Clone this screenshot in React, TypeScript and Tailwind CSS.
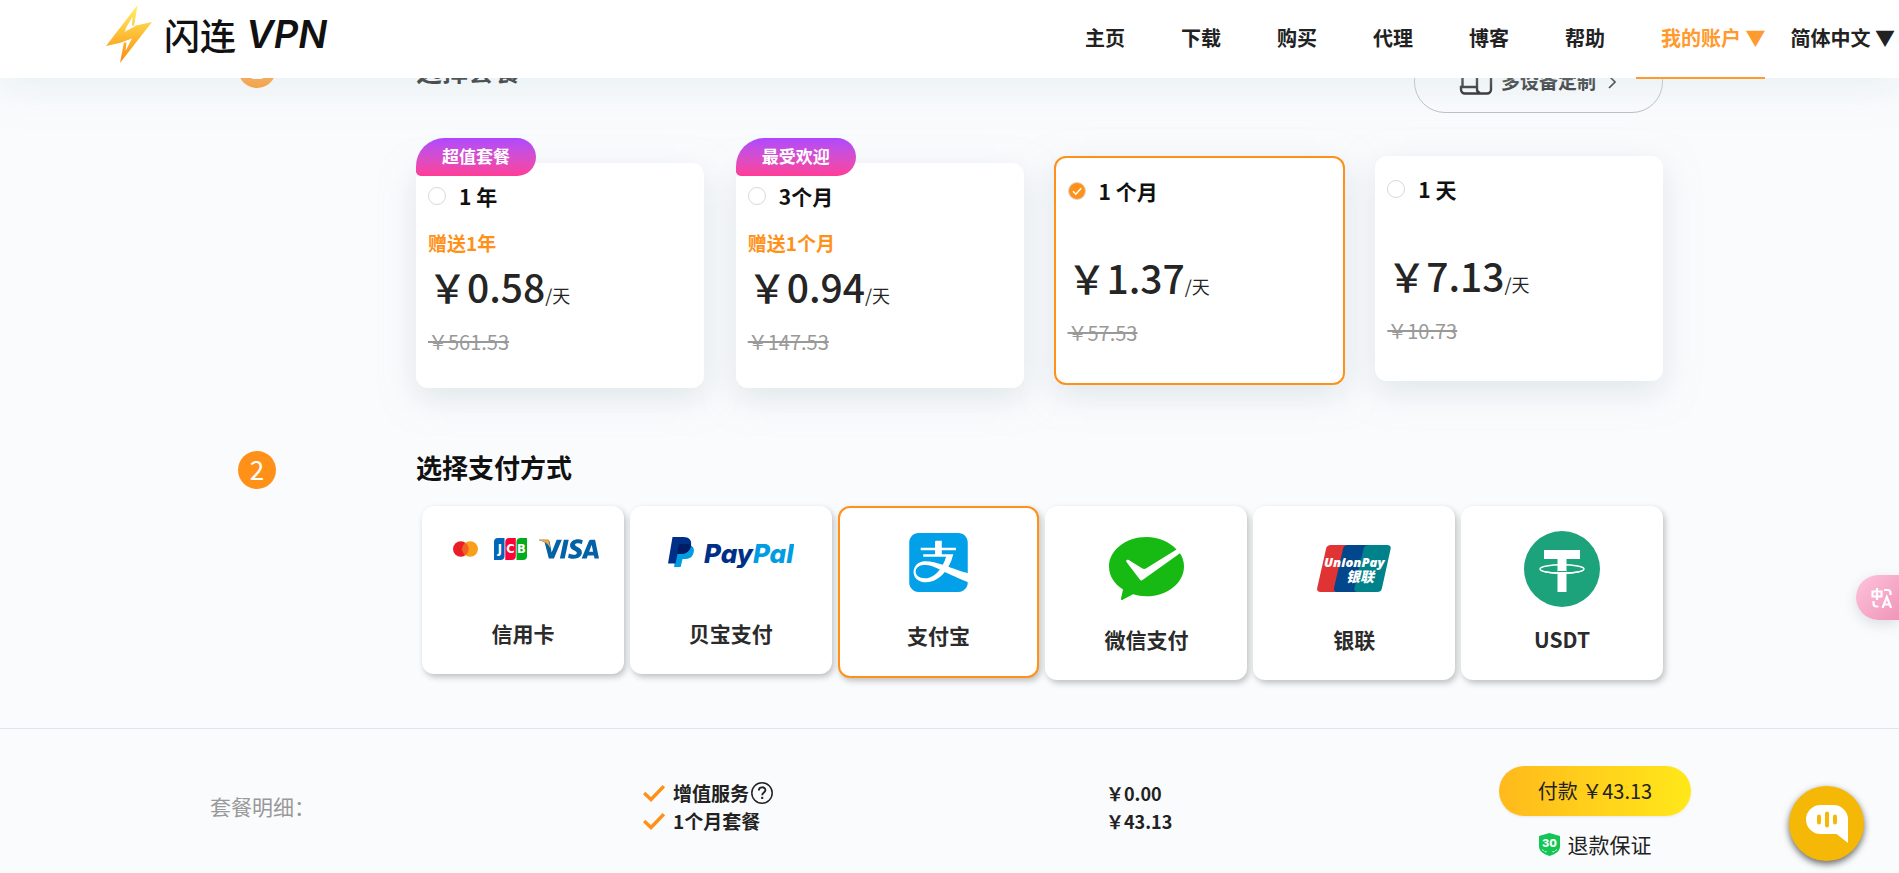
import { useState } from "react";
import type { ReactNode } from "react";
import { SiAlipay, SiVisa } from "react-icons/si";

type Plan = { id: string; name: string; gift?: string; price: string; old: string; ribbon?: string };

const navLinks = ["主页", "下载", "购买", "代理", "博客", "帮助"];

const plans: Plan[] = [
  { id: "year", name: "1 年", gift: "赠送1年", price: "￥0.58", old: "￥561.53", ribbon: "超值套餐" },
  { id: "quarter", name: "3个月", gift: "赠送1个月", price: "￥0.94", old: "￥147.53", ribbon: "最受欢迎" },
  { id: "month", name: "1 个月", price: "￥1.37", old: "￥57.53" },
  { id: "day", name: "1 天", price: "￥7.13", old: "￥10.73" },
];

function BoltLogo() {
  return (
    <svg viewBox="0 0 46 58" className="h-[58px] w-[46px]" aria-hidden="true">
      <defs>
        <linearGradient id="bolt" x1="0" y1="0" x2="0" y2="1">
          <stop offset="0" stopColor="#fff06a" />
          <stop offset="0.5" stopColor="#fdbf35" />
          <stop offset="1" stopColor="#f98a12" />
        </linearGradient>
      </defs>
      <path d="M31.500 0 0 41l18-4-4 21L46 17l-18 4z" fill="url(#bolt)" />
      <path d="M26.500 12 19 24.500l7.500-2.500 5-1.800L19 26l7-5z" fill="#fff" />
      <path d="M26.500 12 25 20.500l4.500.3L18.500 27z" fill="#fff" />
      <path d="M19.500 46 26 33.500 19 36l-4.500 2 6-.5z" fill="#fff" />
    </svg>
  );
}

function DevicesIcon() {
  return (
    <svg viewBox="0 0 34 30" className="h-[30px] w-[34px]" fill="none" stroke="#1c1c1e" strokeWidth="2.400" aria-hidden="true">
      <path d="M3.500 21V5a3 3 0 0 1 3-3h18a3 3 0 0 1 3 3v1" />
      <path d="M18 22H2v2.500A4 4 0 0 0 6 28.500h22a4 4 0 0 0 4-4V8a2 2 0 0 0-2-2H20a2 2 0 0 0-2 2v16a4 4 0 0 0 3 4" />
    </svg>
  );
}

function StepBadge({ n }: { n: number }) {
  return (
    <div className="w-[178px] shrink-0">
      <div className="flex h-[38px] w-[38px] items-start justify-center rounded-full bg-[#ff9119] text-[26px] leading-9 text-white">
        {n}
      </div>
    </div>
  );
}

function PlanCard({ plan, checked, onSelect }: { plan: Plan; checked: boolean; onSelect: () => void }) {
  return (
    <label
      className={
        "relative block cursor-pointer rounded-xl bg-white px-3 pb-[26px] shadow-[0_10px_32px_rgba(200,214,217,0.55)] " +
        (checked ? "-mx-0.5 border-2 border-[#ff9119] " : "") +
        (plan.ribbon ? "mt-[7px]" : "")
      }
    >
      {plan.ribbon && (
        <span className="absolute -top-[25px] left-0 flex h-[38px] w-[120px] items-center justify-center rounded-[30px_20px_20px_5px] bg-linear-to-b from-[#af47ff] to-[#ff3c96] pb-0.5 text-[17px] font-bold text-white">
          {plan.ribbon}
        </span>
      )}
      <span className="flex h-[66px] items-center gap-[13px]">
        <span className="relative flex h-[18px] w-[18px]">
          <input
            type="radio"
            name="plan"
            checked={checked}
            onChange={onSelect}
            className="h-[18px] w-[18px] appearance-none rounded-full border border-[#d9d9d9] bg-white checked:bg-[#ff9119]"
          />
          {checked && (
            <svg viewBox="0 0 18 18" className="pointer-events-none absolute inset-0 h-[18px] w-[18px]" fill="none" stroke="#fff" strokeWidth="1.500">
              <path d="M5 9.300 7.800 12.200 13.200 6.200" />
            </svg>
          )}
        </span>
        <span className="text-[21px] leading-[30px] font-bold text-[#111]">{plan.name}</span>
      </span>
      <span className={"block text-[19px] leading-7 font-bold text-[#ff9119] " + (plan.gift ? "h-7" : "h-6")}>
        {plan.gift}
      </span>
      <span className="flex items-baseline leading-[58px] text-[#252525]">
        <span className="text-[39px] font-medium">{plan.price}</span>
        <span className="text-lg">/天</span>
      </span>
      <span className={"block text-[20px] leading-[54px] text-[#999] line-through " + (plan.gift ? "h-[47px]" : "h-[51px]")}>
        {plan.old}
      </span>
    </label>
  );
}

function CardLogos() {
  return (
    <div className="flex items-center pl-1.5">
      <svg viewBox="0 0 25 16" className="h-4 w-[25px]" aria-label="Mastercard">
        <circle cx="7.800" cy="8" r="7.800" fill="#ea1c26" />
        <circle cx="17.200" cy="8" r="7.800" fill="#f99f1b" />
        <path d="M12.500 1.800a7.800 7.800 0 0 1 0 12.400 7.800 7.800 0 0 1 0-12.400z" fill="#f26022" />
      </svg>
      <svg viewBox="0 0 33 22" className="ml-4 h-[22px] w-[33px]" aria-label="JCB">
        <path d="M4 0h6.500v18a4 4 0 0 1-4 4H0V4a4 4 0 0 1 4-4z" fill="#0067b8" />
        <path d="M15.300 0h6.500v18a4 4 0 0 1-4 4h-6.500V4a4 4 0 0 1 4-4z" fill="#ff0037" />
        <path d="M26.500 0H33v18a4 4 0 0 1-4 4h-6.500V4a4 4 0 0 1 4-4z" fill="#00ad1d" />
        <g textAnchor="middle" fontSize="11.500" fontWeight="700" fill="#fff" fontFamily="DejaVu Sans, sans-serif">
          <text x="6" y="15">J</text>
          <text x="16.500" y="15">C</text>
          <text x="27.500" y="15">B</text>
        </g>
      </svg>
      <span className="relative ml-3 block h-5 w-[60px] overflow-hidden">
        <SiVisa className="absolute -top-5 left-0 h-[60px] w-[60px] text-[#0361a5]" aria-label="Visa" />
        <svg viewBox="0 0 12 10" className="absolute top-0 left-0 h-2.5 w-3" aria-hidden="true">
          <path d="M0 .5h9.500l2 9C9.500 5 6 2.500 0 1.200z" fill="#f2a63b" />
        </svg>
      </span>
    </div>
  );
}

function PayPalLogo() {
  return (
    <svg viewBox="0 0 126 31" className="h-[31px] w-[126px]" aria-label="PayPal">
      <path d="M9.500 8h12c4.500 1 5 5 4 8-1.200 4.500-4.500 6-9 6h-2l-1.800 8H6z" fill="#009de3" />
      <path d="M4.500 0h11c5.500 0 8.500 3 7.500 8.500C22 14 18 17 13 17h-3.500l-2 9.500H0z" fill="#002f87" />
      <path d="M10.500 8.500C11 7.500 12 7 13 7h9.800c.3 4-2 7.500-5 9-1.800.8-4 1-8.500 1z" fill="#001c64" />
      <text x="36" y="25.500" fontSize="26" fontWeight="800" fontStyle="italic" fontFamily="Inter, sans-serif" fill="#002f87">
        Pay<tspan fill="#009de3">Pal</tspan>
      </text>
    </svg>
  );
}

function WeChatPayLogo() {
  return (
    <svg viewBox="0 0 75 63" className="h-[63px] w-[75px]" aria-hidden="true">
      <path
        d="M37.500 0C16.800 0 0 13.200 0 29.500c0 9.300 5.400 17.600 14 23L12 61.500c-.3 1.400.6 1.800 1.600 1.200L24 57.300c4.200 1.300 8.700 2 13.500 2 20.700 0 37.500-13.300 37.500-29.800 0-4.800-1.400-9.300-4-13.300L33.500 43c-1 .8-2 .6-2.700-.4L17.500 25c-1-1.600.6-3 2.200-2L33 31.300c1.600.9 2.800.8 4.300 0L67.500 12.500C60.800 5 49.900 0 37.500 0z"
        fill="#16ba12"
      />
    </svg>
  );
}

function UnionPayLogo() {
  return (
    <svg viewBox="0 0 74 47" className="h-[47px] w-[74px]" aria-label="UnionPay">
      <path d="M14 0h20L24 47H3.500C1 47-.4 45.500.2 43L9 4c.7-3 2.200-4 5-4z" fill="#e03434" />
      <path d="M31 0h22L42 47H20c-2.500 0-3.500-1.500-3-4L26 4c.7-3 2.200-4 5-4z" fill="#02468b" />
      <path d="M51.500 0H70c3 0 4.200 1.500 3.600 4L65 43c-.7 3-2 4-5 4H41c-3 0-4.200-1.500-3.600-4L46.500 4c.7-3 2.200-4 5-4z" fill="#00828b" />
      <text x="7" y="22" fontSize="13" fontWeight="800" fontStyle="italic" fontFamily="Open Sans, sans-serif" fill="#fff">UnionPay</text>
      <text x="29" y="37" fontSize="14" fontWeight="900" fontStyle="italic" fontFamily="Noto Sans CJK SC, sans-serif" fill="#fff">银联</text>
    </svg>
  );
}

function TetherLogo() {
  return (
    <svg viewBox="0 0 76 76" className="h-[76px] w-[76px]" aria-hidden="true">
      <circle cx="38" cy="38" r="38" fill="#1ca37b" />
      <path d="M20 19h36v9H42.500v33h-9V28H20z" fill="#fff" />
      <path d="M33.500 40.500h9" stroke="#1ca37b" strokeWidth="1" />
      <ellipse cx="38" cy="38" rx="22" ry="4.200" fill="none" stroke="#fff" strokeWidth="1.400" />
      <path d="M15.500 38c0 6.500 45 6.500 45 0-2 4.500-43 4.500-45 0z" fill="#fff" />
    </svg>
  );
}

type Method = { id: string; name: string; logo: ReactNode; body: string };

const methods: Method[] = [
  { id: "card", name: "信用卡", logo: <CardLogos />, body: "h-[168px] pt-8" },
  { id: "paypal", name: "贝宝支付", logo: <PayPalLogo />, body: "h-[168px] pt-[31px]" },
  { id: "alipay", name: "支付宝", logo: <SiAlipay className="h-[59px] w-[59px] text-[#02a0e9]" />, body: "h-[172px] pt-[25px]" },
  { id: "wechat", name: "微信支付", logo: <WeChatPayLogo />, body: "h-[174px] pt-[31px]" },
  { id: "unionpay", name: "银联", logo: <UnionPayLogo />, body: "h-[174px] pt-[39px]" },
  { id: "usdt", name: "USDT", logo: <TetherLogo />, body: "h-[174px] pt-[25px]" },
];

function MethodCard({ method, checked, onSelect }: { method: Method; checked: boolean; onSelect: () => void }) {
  return (
    <label
      className={
        "relative flex cursor-pointer flex-col items-center justify-between rounded-xl bg-white pb-[25px] shadow-[2px_3px_6px_rgba(0,0,0,0.24)] " +
        method.body +
        (checked ? " border-2 border-[#ff9119]" : "")
      }
    >
      <input type="radio" name="method" className="sr-only" checked={checked} onChange={onSelect} />
      {method.logo}
      <span className="text-[21px] leading-8 font-bold text-[#2b2b2b]">{method.name}</span>
    </label>
  );
}

function Tick() {
  return (
    <svg viewBox="0 0 22 17" className="h-[17px] w-[22px]" fill="none" stroke="#ff9119" strokeWidth="3.400" aria-hidden="true">
      <path d="M1.200 8 8 14.500 20.800 1.200" />
    </svg>
  );
}

export default function App() {
  const [plan, setPlan] = useState("month");
  const [method, setMethod] = useState("alipay");

  return (
    <div className="min-h-screen bg-[#fafbfd] font-['Noto_Sans_CJK_SC','Noto_Sans',sans-serif] text-[#222]">
      <header className="sticky top-0 z-20 flex h-[78px] items-start justify-between bg-white pr-1 pl-[106px] shadow-[0_8px_36px_rgba(214,230,235,0.5)]">
        <a href="#home" className="flex items-center pt-[5px] text-[#111]">
          <BoltLogo />
          <span className="ml-3 flex items-center gap-2.5">
            <span className="text-[36px] leading-[50px] font-medium [font-style:oblique_6deg]">闪连</span>
            <span className="font-['Inter',sans-serif] text-[38px] leading-[50px] font-semibold italic">VPN</span>
          </span>
        </a>
        <nav className="flex text-xl font-bold">
          <div className="flex gap-[31px]">
            {navLinks.map((l) => (
              <a key={l} href="#nav" className="flex h-[79px] items-center pb-1 pl-[25px]">
                {l}
              </a>
            ))}
            <a href="#account" className="flex h-[79px] items-center border-b-2 border-[#ff9a2e] pb-0.5 pl-[25px] text-[#ff9a2e]">
              我的账户 ▼
            </a>
          </div>
          <a href="#language" className="flex h-[79px] items-center pb-1 pl-[25px]">
            简体中文 ▼
          </a>
        </nav>
      </header>

      <main className="-mt-7 pr-[236px] pb-12 pl-[238px]">
        <section className="flex">
          <StepBadge n={1} />
          <div className="min-w-0 flex-1">
            <div className="flex items-start justify-between">
              <h2 className="text-[26px] leading-10 font-bold text-[#111]">选择套餐</h2>
              <button type="button" className="flex h-[63px] w-[249px] items-center justify-center gap-2 rounded-[31px] border border-[#b9bfc4] pr-0.5 text-[19px] font-bold text-[#222]">
                <span className="pb-1"><DevicesIcon /></span>
                多设备定制
                <svg viewBox="0 0 8 14" className="ml-1 h-3.5 w-2" fill="none" stroke="#222" strokeWidth="1.600">
                  <path d="m1 1 6 6-6 6" />
                </svg>
              </button>
            </div>
            <div className="mt-[43px] grid grid-cols-4 items-start gap-8">
              {plans.map((p) => (
                <PlanCard key={p.id} plan={p} checked={plan === p.id} onSelect={() => setPlan(p.id)} />
              ))}
            </div>
          </div>
        </section>

        <section className="mt-[63px] flex">
          <StepBadge n={2} />
          <div className="min-w-0 flex-1">
            <h2 className="text-[26px] leading-8 font-bold text-[#111]">选择支付方式</h2>
            <div className="mt-[23px] grid grid-cols-6 items-start gap-1.5 pl-1.5">
              {methods.map((m) => (
                <MethodCard key={m.id} method={m} checked={method === m.id} onSelect={() => setMethod(m.id)} />
              ))}
            </div>
          </div>
        </section>
      </main>

      <footer className="grid grid-cols-[433fr_463fr_393fr_192fr] items-start border-t border-[#dce8ea] pt-[37px] pr-[208px] pl-[210px]">
        <div className="mt-6 text-[21px] leading-8 text-[#999]">套餐明细：</div>
        <ul className="mt-[13px] text-[19px] leading-7 font-bold">
          <li className="flex items-center gap-2">
            <Tick />
            <span className="flex items-center gap-0.5">
              增值服务
              <svg viewBox="0 0 22 22" className="h-[22px] w-[22px]" fill="none" stroke="#222" aria-label="帮助">
                <circle cx="11" cy="11" r="10.200" strokeWidth="1.500" />
                <path d="M7.800 8.600c0-4.400 6.600-4.200 6.600-.4 0 2.200-3.200 2.600-3.200 5" strokeWidth="1.900" />
                <path d="M11.200 14.800v2.200" strokeWidth="2" />
              </svg>
            </span>
          </li>
          <li className="flex items-center gap-2">
            <Tick />
            1个月套餐
          </li>
        </ul>
        <div className="mt-[13px] text-lg leading-7 font-bold">
          <p>￥0.00</p>
          <p>￥43.13</p>
        </div>
        <div className="flex flex-col items-center">
          <button type="button" className="h-[50px] w-full rounded-full bg-linear-to-r from-[#ffb91c] to-[#ffe819] text-xl text-[#222] shadow-[0_1px_3px_rgba(0,0,0,0.08)]">
            付款 ￥43.13
          </button>
          <p className="mt-3 flex items-center gap-2 text-[21px] leading-8">
            <svg viewBox="0 0 21 23" className="h-[23px] w-[21px]" aria-hidden="true">
              <path d="M10.500 0 21 3v10.500c0 5-5 7.500-10.500 9.500C5 21 0 18.500 0 13.500V3z" fill="#13c553" />
              <text x="10.500" y="14" textAnchor="middle" fontSize="11" fontWeight="800" fontFamily="Inter, sans-serif" fill="#fff">30</text>
              <path d="M3.500 16.500c1.500 2.500 3 2.500 5 2M17.500 16.500c-1.500 2.500-3 2.500-5 2" fill="none" stroke="#fff" strokeWidth="1" strokeDasharray="2 1" />
            </svg>
            退款保证
          </p>
        </div>
      </footer>

      <button type="button" aria-label="翻译" className="fixed top-[575px] right-0 z-30 flex h-[45px] w-[43px] items-center justify-center rounded-l-full bg-linear-to-br from-[#fdc3dc] to-[#f095b8] pl-2 shadow-[0_4px_14px_rgba(0,0,0,0.12)]">
        <svg viewBox="0 0 22 20" className="h-5 w-[22px]" fill="none" stroke="#fff" strokeWidth="2.200" aria-hidden="true">
          <path d="M1.500 3.500h9v5h-9zM6 0v12M13 2h3.500c1.800 0 3 1 3 3v2M2.500 13v2.500c0 2 1 3 3 3h2" />
          <path d="m11.500 20 4.300-11 4.300 11M13 16.500h6" />
        </svg>
      </button>

      <button type="button" aria-label="在线客服" className="fixed right-[35px] bottom-3 z-30 flex h-[75px] w-[75px] items-center justify-center rounded-full bg-[#f5b807] shadow-[0_3px_7px_rgba(0,0,0,0.6)]">
        <svg viewBox="0 0 42 38" className="h-[38px] w-[42px]" aria-hidden="true">
          <path d="M14.500 0h13A14.500 14.500 0 0 1 42 14.500V38l-11.500-9h-16a14.500 14.500 0 0 1 0-29z" fill="#fff" />
          <path d="M13 11.500v6M21 8.500v12M29 11.500v6" stroke="#f5b807" strokeWidth="4" strokeLinecap="round" />
        </svg>
      </button>
    </div>
  );
}
